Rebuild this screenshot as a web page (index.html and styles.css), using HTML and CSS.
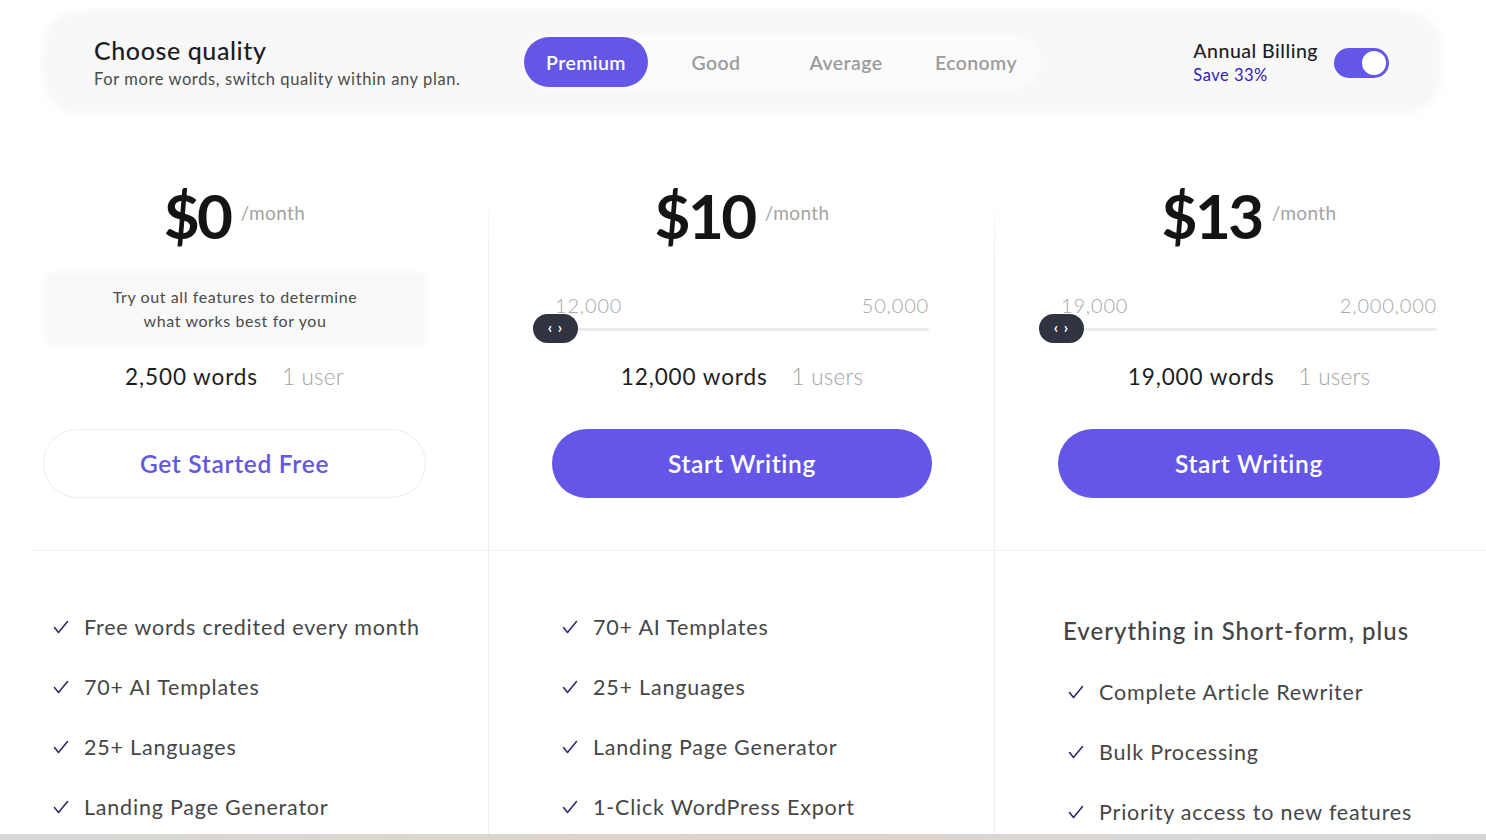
FILE: index.html
```html
<!DOCTYPE html>
<html lang="en">
<head>
<meta charset="utf-8">
<title>Pricing</title>
<link rel="stylesheet" href="styles.css">
</head>
<body>
<div class="topbar">
  <div class="intro">
    <div class="intro-title">Choose quality</div>
    <div class="intro-sub">For more words, switch quality within any plan.</div>
  </div>
  <div class="tabs">
    <div class="tab active">Premium</div>
    <div class="tab">Good</div>
    <div class="tab">Average</div>
    <div class="tab">Economy</div>
  </div>
  <div class="billing">
    <div class="billing-text">
      <div class="billing-title">Annual Billing</div>
      <div class="billing-save">Save 33%</div>
    </div>
    <div class="toggle"><span class="knob"></span></div>
  </div>
</div>

<div class="plans">
  <div class="plan plan-first">
    <div class="plan-top">
      <div class="price"><span class="amount">$0</span><span class="per">/month</span></div>
      <div class="middle">
        <div class="desc">Try out all features to determine<br>what works best for you</div>
      </div>
      <div class="quota"><span class="words">2,500 words</span><span class="users">1 user</span></div>
      <div class="btn btn-outline">Get Started Free</div>
    </div>
    <ul class="features">
      <li><svg class="check" viewBox="0 0 16 14"><path d="M1.5 7.5 L5.5 12.5 L14.5 1.5"/></svg>Free words credited every month</li>
      <li><svg class="check" viewBox="0 0 16 14"><path d="M1.5 7.5 L5.5 12.5 L14.5 1.5"/></svg>70+ AI Templates</li>
      <li><svg class="check" viewBox="0 0 16 14"><path d="M1.5 7.5 L5.5 12.5 L14.5 1.5"/></svg>25+ Languages</li>
      <li><svg class="check" viewBox="0 0 16 14"><path d="M1.5 7.5 L5.5 12.5 L14.5 1.5"/></svg>Landing Page Generator</li>
    </ul>
  </div>

  <div class="plan plan-line">
    <div class="plan-top">
      <div class="price"><span class="amount">$10</span><span class="per">/month</span></div>
      <div class="middle">
        <div class="slider">
          <div class="slider-labels"><span>12,000</span><span>50,000</span></div>
          <div class="track"><span class="thumb">&lsaquo; &rsaquo;</span></div>
        </div>
      </div>
      <div class="quota"><span class="words">12,000 words</span><span class="users">1 users</span></div>
      <div class="btn btn-solid">Start Writing</div>
    </div>
    <ul class="features">
      <li><svg class="check" viewBox="0 0 16 14"><path d="M1.5 7.5 L5.5 12.5 L14.5 1.5"/></svg>70+ AI Templates</li>
      <li><svg class="check" viewBox="0 0 16 14"><path d="M1.5 7.5 L5.5 12.5 L14.5 1.5"/></svg>25+ Languages</li>
      <li><svg class="check" viewBox="0 0 16 14"><path d="M1.5 7.5 L5.5 12.5 L14.5 1.5"/></svg>Landing Page Generator</li>
      <li><svg class="check" viewBox="0 0 16 14"><path d="M1.5 7.5 L5.5 12.5 L14.5 1.5"/></svg>1-Click WordPress Export</li>
    </ul>
  </div>

  <div class="plan plan-line plan-last">
    <div class="plan-top">
      <div class="price"><span class="amount">$13</span><span class="per">/month</span></div>
      <div class="middle">
        <div class="slider">
          <div class="slider-labels"><span>19,000</span><span>2,000,000</span></div>
          <div class="track"><span class="thumb">&lsaquo; &rsaquo;</span></div>
        </div>
      </div>
      <div class="quota"><span class="words">19,000 words</span><span class="users">1 users</span></div>
      <div class="btn btn-solid">Start Writing</div>
    </div>
    <ul class="features features-plus">
      <li class="plus-head">Everything in Short-form, plus</li>
      <li><svg class="check" viewBox="0 0 16 14"><path d="M1.5 7.5 L5.5 12.5 L14.5 1.5"/></svg>Complete Article Rewriter</li>
      <li><svg class="check" viewBox="0 0 16 14"><path d="M1.5 7.5 L5.5 12.5 L14.5 1.5"/></svg>Bulk Processing</li>
      <li><svg class="check" viewBox="0 0 16 14"><path d="M1.5 7.5 L5.5 12.5 L14.5 1.5"/></svg>Priority access to new features</li>
    </ul>
  </div>
</div>
<div class="bottom-strip"></div>
</body>
</html>
```
FILE: styles.css
```css
* { box-sizing: border-box; }
html, body { margin: 0; padding: 0; }
body {
  width: 1486px;
  height: 840px;
  overflow: hidden;
  background: #fff;
  font-family: "Lato", "Liberation Sans", sans-serif;
  color: #222;
}

/* top bar */
.topbar {
  margin: 14px 48px 0 46px;
  height: 96px;
  background: #f8f8f8;
  border-radius: 34px;
  box-shadow: 0 0 10px 4px #f8f8f8;
  display: flex;
  align-items: center;
  padding: 0 49px 0 48px;
}
.intro { width: 427px; }
.intro-title { font-size: 25px; font-weight: 500; color: #1d1d1f; line-height: 30px; letter-spacing: 0.6px; }
.intro-sub { font-size: 16.5px; color: #4a4a4a; line-height: 22px; margin-top: 3px; letter-spacing: 0.6px; }

.tabs {
  display: flex;
  background: #fbfbfb;
  border-radius: 28px;
  padding: 3px 0;
}
.tab {
  width: 124px;
  margin: 0 3px;
  height: 50px;
  border-radius: 25px;
  display: flex;
  align-items: center;
  justify-content: center;
  font-size: 19.5px;
  font-weight: 600;
  letter-spacing: 0.4px;
  color: #9c9c9c;
}
.tab.active { background: #6457e8; color: #fff; }

.billing { margin-left: auto; display: flex; align-items: center; gap: 16px; }
.billing-title { font-size: 19.5px; font-weight: 500; color: #1d1d1f; line-height: 24px; letter-spacing: 0.5px; }
.billing-save { font-size: 16.5px; color: #2f22b8; line-height: 22px; margin-top: 1px; letter-spacing: 0.5px; }
.toggle {
  width: 55px;
  height: 30px;
  border-radius: 15px;
  background: #6457e8;
  display: flex;
  align-items: center;
  justify-content: flex-end;
  padding-right: 3px;
  margin-top: 2px;
}
.knob { width: 24px; height: 24px; border-radius: 50%; background: #fff; }

/* plans */
.plans {
  display: grid;
  grid-template-columns: 488px 506px 492px;
  height: 724px;
}
.plan { display: flex; flex-direction: column; }
.plan-line {
  background: linear-gradient(to bottom, rgba(235,235,235,0) 85px, #ececec 150px) left top / 1px 100% no-repeat;
}
.plan-top {
  height: 441px;
  padding: 75px 62px 0 64px;
  border-bottom: 1px solid #f1f1f1;
  display: flex;
  flex-direction: column;
}
.plan-first .plan-top { margin-left: 30px; padding-left: 13px; }
.plan-last .plan-top { padding-right: 46px; }

.price {
  height: 60px;
  display: flex;
  align-items: center;
  justify-content: center;
  gap: 10px;
}
.amount { font-size: 62px; font-weight: 700; letter-spacing: -2.5px; color: #141414; line-height: 60px; }
.per { font-size: 19px; color: #a3a3a3; font-weight: 400; margin-top: -5px; letter-spacing: 0.4px; }

.middle { height: 116px; padding-top: 29px; }
.desc {
  height: 69px;
  margin: 0 2px 0 3px;
  background: #f9f9f9;
  border-radius: 6px;
  box-shadow: 0 0 6px 2px #f9f9f9;
  text-align: center;
  font-size: 16px;
  line-height: 24px;
  color: #4a4a4a;
  letter-spacing: 0.6px;
  padding-top: 11px;
}

.slider { padding: 20px 3px 0 3px; }
.slider-labels {
  display: flex;
  justify-content: space-between;
  font-size: 20px;
  font-weight: 300;
  color: #a8a8a8;
  line-height: 22px;
  letter-spacing: 0.8px;
}
.track {
  position: relative;
  height: 3px;
  background: #ececec;
  margin-top: 12px;
  border-radius: 2px;
}
.thumb {
  position: absolute;
  left: -22px;
  top: -14px;
  width: 45px;
  height: 29px;
  border-radius: 15px;
  background: #2f3440;
  color: #fff;
  font-size: 15px;
  font-weight: 700;
  line-height: 27px;
  text-align: center;
  letter-spacing: 1px;
}

.quota {
  height: 30px;
  display: flex;
  justify-content: center;
  align-items: center;
  gap: 24px;
  font-size: 22.5px;
}
.words { color: #1d1d1f; letter-spacing: 0.9px; }
.users { color: #a3a3a3; font-weight: 300; letter-spacing: 0.2px; }

.btn {
  margin-top: 38px;
  height: 69px;
  border-radius: 35px;
  display: flex;
  align-items: center;
  justify-content: center;
  font-size: 24.5px;
  font-weight: 600;
  letter-spacing: 0.7px;
}
.btn-outline { border: 1px solid #ececec; color: #6457e0; background: #fff; }
.btn-solid { background: #6457e8; color: #fff; }

/* features */
.features {
  list-style: none;
  margin: 0;
  padding: 61px 0 0 0;
  display: flex;
  flex-direction: column;
  gap: 30px;
}
.plan-first .features { padding-left: 53px; }
.plan-line .features { padding-left: 74px; }
.features li {
  display: flex;
  align-items: center;
  height: 30px;
  font-size: 21.5px;
  color: #464646;
  letter-spacing: 0.8px;
}
.check {
  width: 16px;
  height: 14px;
  margin-right: 15px;
  fill: none;
  stroke: #34296e;
  stroke-width: 1.6;
  stroke-linecap: round;
  stroke-linejoin: round;
}
.features-plus { padding-top: 64px; gap: 30px; }
.features-plus li.plus-head {
  font-size: 24px;
  font-weight: 500;
  color: #444;
  margin-left: -5px;
  margin-bottom: 2px;
  letter-spacing: 1px;
}

.bottom-strip {
  height: 6px;
  background: linear-gradient(to right, #d7d7d7, #dcd6cc 30%, #ded2c8 55%, #d9d9d9 80%, #d6d6d6);
}
```
